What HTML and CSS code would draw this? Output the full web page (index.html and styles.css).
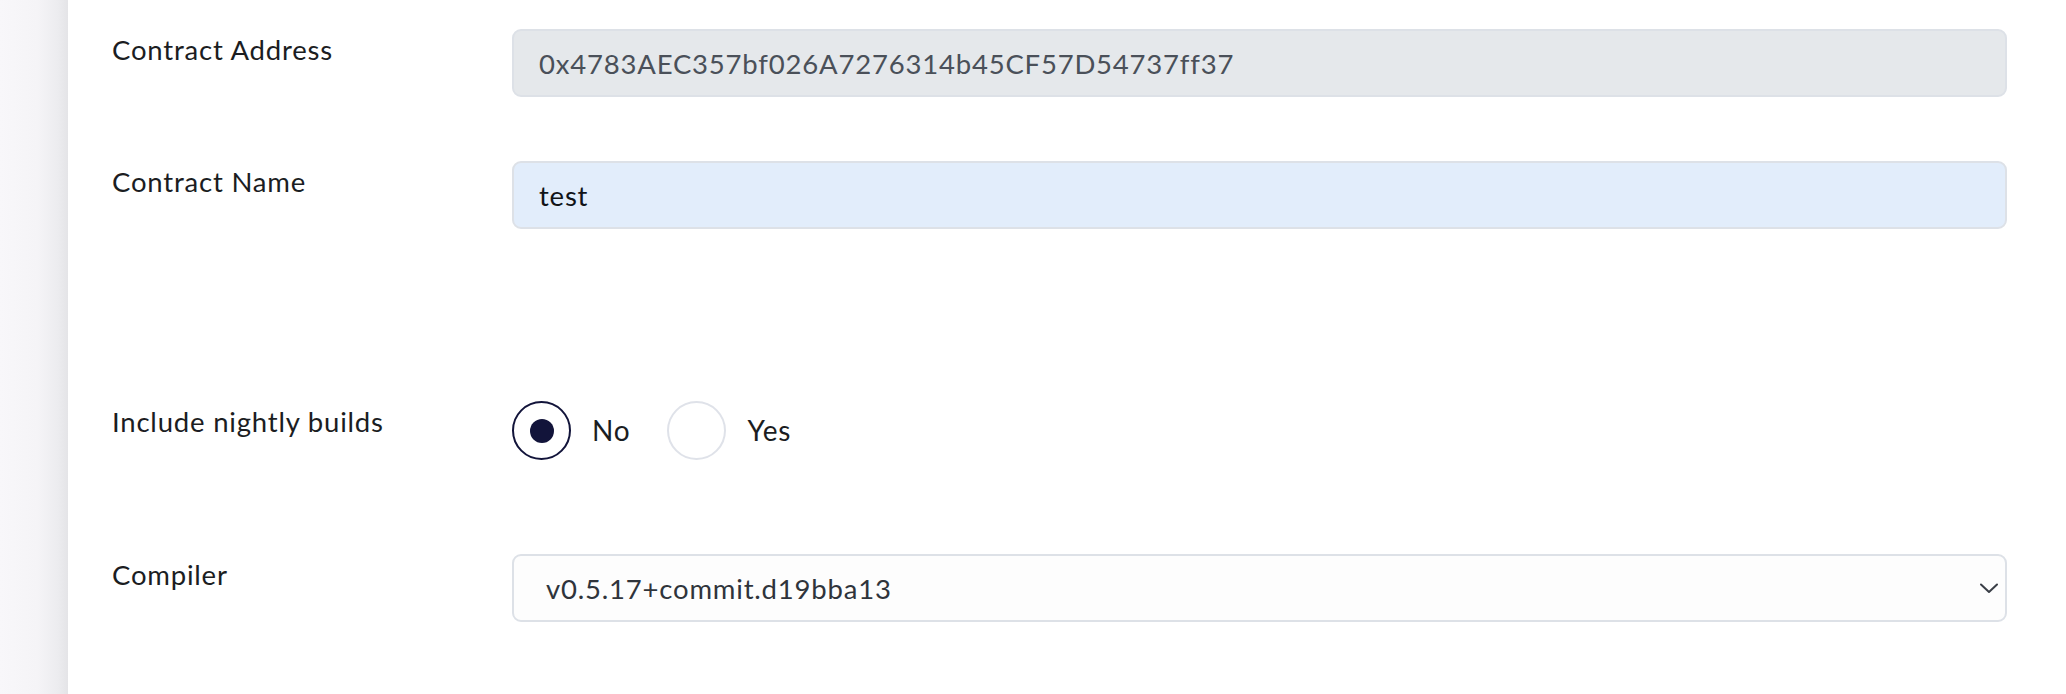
FILE: index.html
```html
<!DOCTYPE html>
<html lang="en">
<head>
<meta charset="utf-8">
<title>Verify Contract</title>
<link rel="stylesheet" href="styles.css">
</head>
<body>
<div class="layout">
  <aside class="sidebar"></aside>
  <main class="panel">
    <form class="form">
      <div class="row row-address">
        <label class="label">Contract Address</label>
        <div class="field field-readonly">0x4783AEC357bf026A7276314b45CF57D54737ff37</div>
      </div>
      <div class="row row-name">
        <label class="label">Contract Name</label>
        <div class="field field-autofill">test</div>
      </div>
      <div class="row row-nightly">
        <label class="label">Include nightly builds</label>
        <div class="radios">
          <span class="radio radio-checked"><span class="dot"></span></span>
          <span class="radio-text">No</span>
          <span class="radio"></span>
          <span class="radio-text">Yes</span>
        </div>
      </div>
      <div class="row row-compiler">
        <label class="label">Compiler</label>
        <div class="field field-select">
          <span class="select-value">v0.5.17+commit.d19bba13</span>
          <svg class="chevron" width="18" height="11" viewBox="0 0 18 11" aria-hidden="true">
            <path d="M1 1.5 L9 9 L17 1.5" fill="none" stroke="#3a3f47" stroke-width="2" stroke-linecap="round" stroke-linejoin="round"/>
          </svg>
        </div>
      </div>
    </form>
  </main>
</div>
</body>
</html>
```
FILE: styles.css
```css
html, body {
  margin: 0;
  padding: 0;
  height: 100%;
  background: #ffffff;
}

body {
  font-family: "Lato", "Noto Sans", "Liberation Sans", sans-serif;
  font-size: 27.5px;
  line-height: 39px;
  letter-spacing: 0.8px;
  color: #1b1d22;
}

.layout {
  display: flex;
  min-height: 100%;
}

.sidebar {
  width: 68px;
  flex: 0 0 68px;
  background: linear-gradient(to right, #f8f7fa 0%, #f5f4f7 55%, #ececef 85%, #e4e4e7 100%);
}

.panel {
  flex: 1;
  background: #ffffff;
  padding: 29px 59px 0 44px;
}

.form {
  display: flex;
  flex-direction: column;
}

.row {
  display: grid;
  grid-template-columns: 400px 1fr;
  align-items: start;
}

.row-name { margin-top: 64px; }
.row-nightly { margin-top: 172px; }
.row-compiler { margin-top: 94px; }

.label {
  padding-top: 1px;
  color: #1b1d22;
  font-weight: 400;
}

.field {
  box-sizing: border-box;
  height: 68px;
  border: 2px solid #dde1e7;
  border-radius: 9px;
  display: flex;
  align-items: center;
  padding: 0 25px;
}

.field-readonly {
  background: #e5e8eb;
  color: #4a5059;
}

.field-autofill {
  background: #e2edfb;
  color: #111317;
}

.field-select {
  background: #fdfdfd;
  color: #2f343b;
  padding-left: 32px;
  padding-right: 7px;
  justify-content: space-between;
}

.chevron {
  display: block;
}

.radios {
  display: flex;
  align-items: center;
  height: 59px;
}

.radio {
  box-sizing: border-box;
  width: 59px;
  height: 59px;
  border-radius: 50%;
  border: 2px solid #dfe2e9;
  display: flex;
  align-items: center;
  justify-content: center;
  background: #ffffff;
}

.radio-checked {
  border: 2.5px solid #12143a;
}

.dot {
  width: 24px;
  height: 24px;
  border-radius: 50%;
  background: #12143a;
}

.radio-text {
  font-size: 28px;
  margin-left: 21px;
  margin-right: 37px;
  color: #1b1d22;
}
```
